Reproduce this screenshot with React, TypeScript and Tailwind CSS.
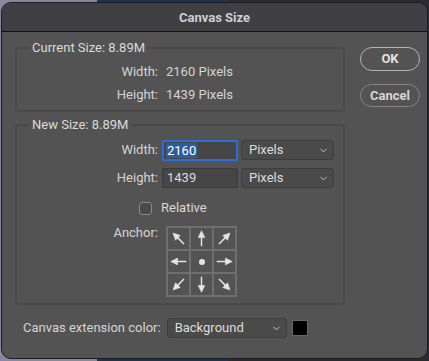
import { ChevronDown } from "lucide-react"

const font = { fontFamily: "Roboto, 'Liberation Sans', sans-serif" }

// rotation per anchor cell, null = centre dot
const anchors: (number | null)[] = [-45, 0, 45, -90, null, 90, -135, 180, 135]

const Arrow = ({ angle }: { angle: number }) => (
  <svg width="23" height="23" viewBox="0 0 23 23">
    <g transform={`rotate(${angle} 11.5 11.5)`} fill="#e4e4e4" stroke="#e4e4e4">
      <line x1="11.5" y1="9" x2="11.5" y2="20" strokeWidth="1.6" />
      <polygon points="11.5,3 7.8,10.5 15.2,10.5" strokeWidth="0.6" strokeLinejoin="round" />
    </g>
  </svg>
)

const Select = ({ value, className }: { value: string; className: string }) => (
  <div
    className={`flex h-[20px] items-center justify-between rounded-[3px] border border-[#3e3e3e] bg-[#4a4a4a] pl-[7px] pr-[4px] text-[13px] text-[#dcdcdc] ${className}`}
  >
    <span>{value}</span>
    <ChevronDown size={11} strokeWidth={2} className="text-[#cfcfcf]" />
  </div>
)

export default function App() {
  return (
    <div
      className="h-[361px] w-[429px] overflow-hidden bg-[linear-gradient(to_right,#8b86a0_0_97px,#1c3359_97px_228px,#2a2a30_228px)]"
      style={font}
    >
      <div className="ml-[1px] mt-[2px] h-[357px] w-[427px] overflow-hidden rounded-[10px] border border-[#1c1c1c] bg-[#535353]">
        {/* title bar */}
        <div className="flex h-[29px] items-center justify-center border-b border-[#111] bg-[#403f44] pt-[1px] text-[13px] font-bold text-[#cfcfd2]">
          Canvas Size
        </div>

        <div className="flex">
          <div className="flex flex-col">
            {/* current size */}
            <fieldset className="ml-[13px] mt-[8px] w-[330px] rounded-[3px] border-2 border-[#4a4a4a] pb-[4px]">
              <legend className="ml-[12px] px-[3px] text-[13px] leading-[16px] text-[#dadada]">
                Current Size: 8.89M
              </legend>
              <div className="mt-[4px] flex h-[23px] items-center text-[13px] text-[#d4d4d4]">
                <span className="w-[141px] text-right">Width:</span>
                <span className="ml-[8px]">2160 Pixels</span>
              </div>
              <div className="flex h-[23px] items-center text-[13px] text-[#d4d4d4]">
                <span className="w-[141px] text-right">Height:</span>
                <span className="ml-[8px]">1439 Pixels</span>
              </div>
            </fieldset>

            {/* new size */}
            <fieldset className="ml-[13px] mt-[5px] w-[330px] rounded-[3px] border-2 border-[#4a4a4a] pb-[6px]">
              <legend className="ml-[12px] px-[3px] text-[13px] leading-[16px] text-[#dadada]">
                New Size: 8.89M
              </legend>
              <div className="mt-[7px] flex h-[20px] items-center text-[13px] text-[#d4d4d4]">
                <span className="w-[141px] text-right">Width:</span>
                <div className="ml-[4px] flex h-[21px] w-[76px] items-center rounded-[2px] border-2 border-[#2a6fd6] bg-[#464646] pl-[2px]">
                  <span className="bg-[#2d5d9c] px-[1px] leading-[15px] text-white">2160</span>
                </div>
                <Select value="Pixels" className="ml-[3px] w-[93px]" />
              </div>
              <div className="mt-[8px] flex h-[20px] items-center text-[13px] text-[#d4d4d4]">
                <span className="w-[141px] text-right">Height:</span>
                <div className="ml-[4px] flex h-[20px] w-[76px] items-center rounded-[2px] border border-[#3a3a3a] bg-[#464646] pl-[4px] text-[#dcdcdc]">
                  1439
                </div>
                <Select value="Pixels" className="ml-[3px] w-[93px]" />
              </div>
              <div className="mt-[11px] flex h-[18px] items-center text-[13px] text-[#d8d8d8]">
                <span className="ml-[122px] h-[13px] w-[13px] rounded-[3px] border border-[#8a8a8a] bg-[#4a4a4a]" />
                <span className="ml-[9px]">Relative</span>
              </div>
              <div className="mt-[9px] flex text-[13px] text-[#d4d4d4]">
                <span className="-mt-[3px] w-[141px] text-right">Anchor:</span>
                <div className="ml-[8px] grid grid-cols-3 border border-[#6f6f6f]">
                  {anchors.map((a, i) => (
                    <div
                      key={i}
                      className="flex h-[23px] w-[23px] items-center justify-center border-[0.5px] border-[#6f6f6f]"
                    >
                      {a === null ? (
                        <span className="h-[6px] w-[6px] rounded-full bg-[#e4e4e4]" />
                      ) : (
                        <Arrow angle={a} />
                      )}
                    </div>
                  ))}
                </div>
              </div>
            </fieldset>
          </div>

          {/* buttons */}
          <div className="ml-[15px] mt-[15px] flex flex-col gap-[13px]">
            <button className="h-[24px] w-[60px] rounded-full border border-[#b4b4b4] text-[13px] font-bold text-[#e2e2e2]">
              OK
            </button>
            <button className="h-[23px] w-[60px] rounded-full border border-[#858585] text-[13px] font-bold text-[#d6d6d6]">
              Cancel
            </button>
          </div>
        </div>

        {/* extension color */}
        <div className="mt-[13px] flex items-center text-[13px] text-[#d4d4d4]">
          <span className="ml-[21px]">Canvas extension color:</span>
          <Select value="Background" className="ml-[6px] w-[120px]" />
          <span className="ml-[5px] h-[16px] w-[16px] border border-[#6a6a6a] bg-black" />
        </div>
      </div>
    </div>
  )
}
